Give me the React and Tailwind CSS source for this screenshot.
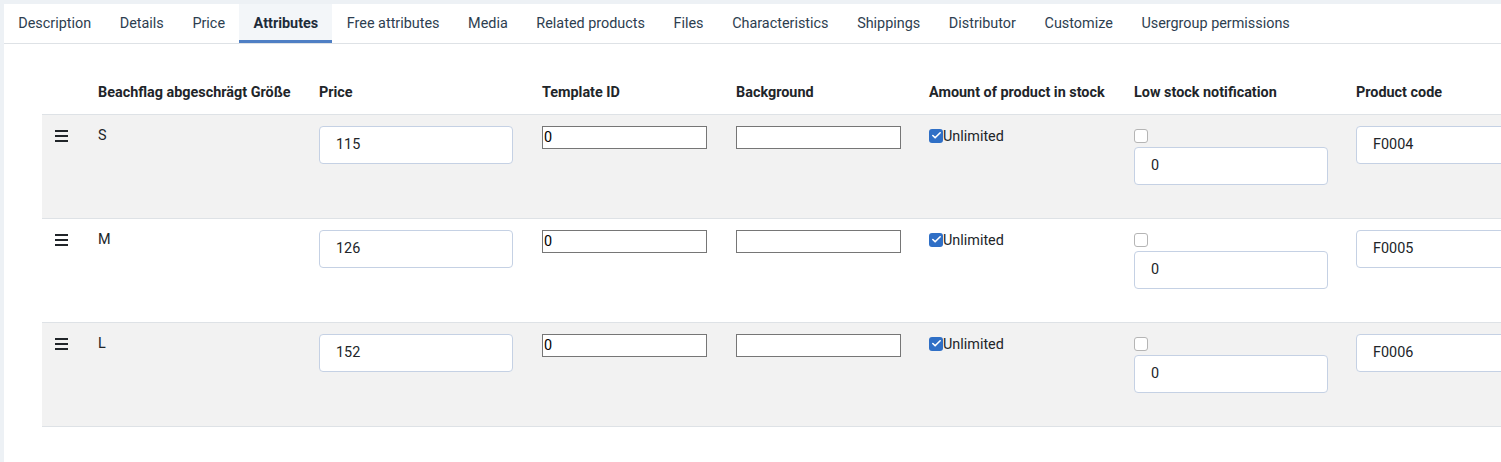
import { Check } from 'lucide-react'

const TABS = [
  'Description', 'Details', 'Price', 'Attributes', 'Free attributes', 'Media',
  'Related products', 'Files', 'Characteristics', 'Shippings', 'Distributor',
  'Customize', 'Usergroup permissions',
]

const ROWS = [
  { size: 'S', price: '115', code: 'F0004' },
  { size: 'M', price: '126', code: 'F0005' },
  { size: 'L', price: '152', code: 'F0006' },
]

const COLS = [
  { label: '', w: 'w-[44px]' },
  { label: 'Beachflag abgeschrägt Größe', w: 'w-[221px]' },
  { label: 'Price', w: 'w-[223px]' },
  { label: 'Template ID', w: 'w-[194px]' },
  { label: 'Background', w: 'w-[193px]' },
  { label: 'Amount of product in stock', w: 'w-[205px]' },
  { label: 'Low stock notification', w: 'w-[222px]' },
  { label: 'Product code', w: 'w-[260px]' },
]

function Hamburger() {
  return (
    <svg width="13" height="12" viewBox="0 0 13 12" className="mt-[4px]">
      <rect x="0" y="0" width="13" height="2" fill="#212529" />
      <rect x="0" y="5" width="13" height="2" fill="#212529" />
      <rect x="0" y="10" width="13" height="2" fill="#212529" />
    </svg>
  )
}

const niceInput = "w-[194px] h-[38px] rounded-[4px] border border-[#c5d1e4] bg-white pl-4 text-[14.4px] text-[#212529] outline-none"
const plainInput = "w-[165px] h-[23px] border border-[#767676] bg-white px-[1px] text-[14.4px] text-black outline-none"

export default function App() {
  return (
    <div className="min-h-[462px] bg-[#edf1f5] pl-[4px] pt-[4px] font-['Roboto','Liberation_Sans',sans-serif]">
      <div className="min-h-[458px] overflow-hidden bg-white">
        {/* Tabs */}
        <div className="flex h-[40px] border-b border-[#dee2e6]">
          {TABS.map(t => (
            <div
              key={t}
              className={t === 'Attributes'
                ? "flex items-center border-b-[3px] border-[#4f7fc4] bg-[#f3f6f9] px-[14.3px] pt-[3px] text-[14.4px] font-bold text-[#1e2b3a] whitespace-nowrap"
                : "flex items-center px-[14.3px] text-[14.4px] text-[#2d3e50] whitespace-nowrap"}
            >
              {t}
            </div>
          ))}
        </div>

        {/* Attribute table */}
        <div className="pl-[38px] pt-[26px]">
          <table className="w-[1562px] table-fixed border-collapse text-[14.4px] text-[#212529]">
            <thead>
              <tr className="h-[44px]">
                {COLS.map((c, i) => (
                  <th key={i} className={`${c.w} px-3 pt-[2px] text-left align-middle font-bold whitespace-nowrap`}>{c.label}</th>
                ))}
              </tr>
            </thead>
            <tbody>
              {ROWS.map((r, i) => (
                <tr key={r.size} className={`h-[104px] border-t border-b border-[#dee2e6] align-top ${i % 2 === 0 ? 'bg-[#f2f2f2]' : 'bg-white'}`}>
                  <td className="pl-[13px] pr-3 pt-[11px]"><Hamburger /></td>
                  <td className="px-3 pt-[11px] leading-5">{r.size}</td>
                  <td className="px-3 pt-[11px]"><input className={niceInput} defaultValue={r.price} /></td>
                  <td className="px-3 pt-[11px]"><input className={plainInput} defaultValue="0" /></td>
                  <td className="px-3 pt-[11px]"><input className={plainInput} defaultValue="" /></td>
                  <td className="px-3 pt-[11px]">
                    <label className="flex items-start leading-5">
                      <span className="mt-[3px] flex h-[14px] w-[14px] shrink-0 items-center justify-center rounded-[3px] bg-[#2f6fc6]">
                        <Check size={11} strokeWidth={3.5} color="white" />
                      </span>
                      <span className="mt-[1px]">Unlimited</span>
                    </label>
                  </td>
                  <td className="px-3 pt-[11px]">
                    <div className="mt-[3px] h-[14px] w-[14px] rounded-[3px] border border-[#b5b5b5] bg-white" />
                    <input className={`${niceInput} mt-[4px]`} defaultValue="0" />
                  </td>
                  <td className="px-3 pt-[11px]"><input className={niceInput} defaultValue={r.code} /></td>
                </tr>
              ))}
            </tbody>
          </table>
        </div>
      </div>
    </div>
  )
}
